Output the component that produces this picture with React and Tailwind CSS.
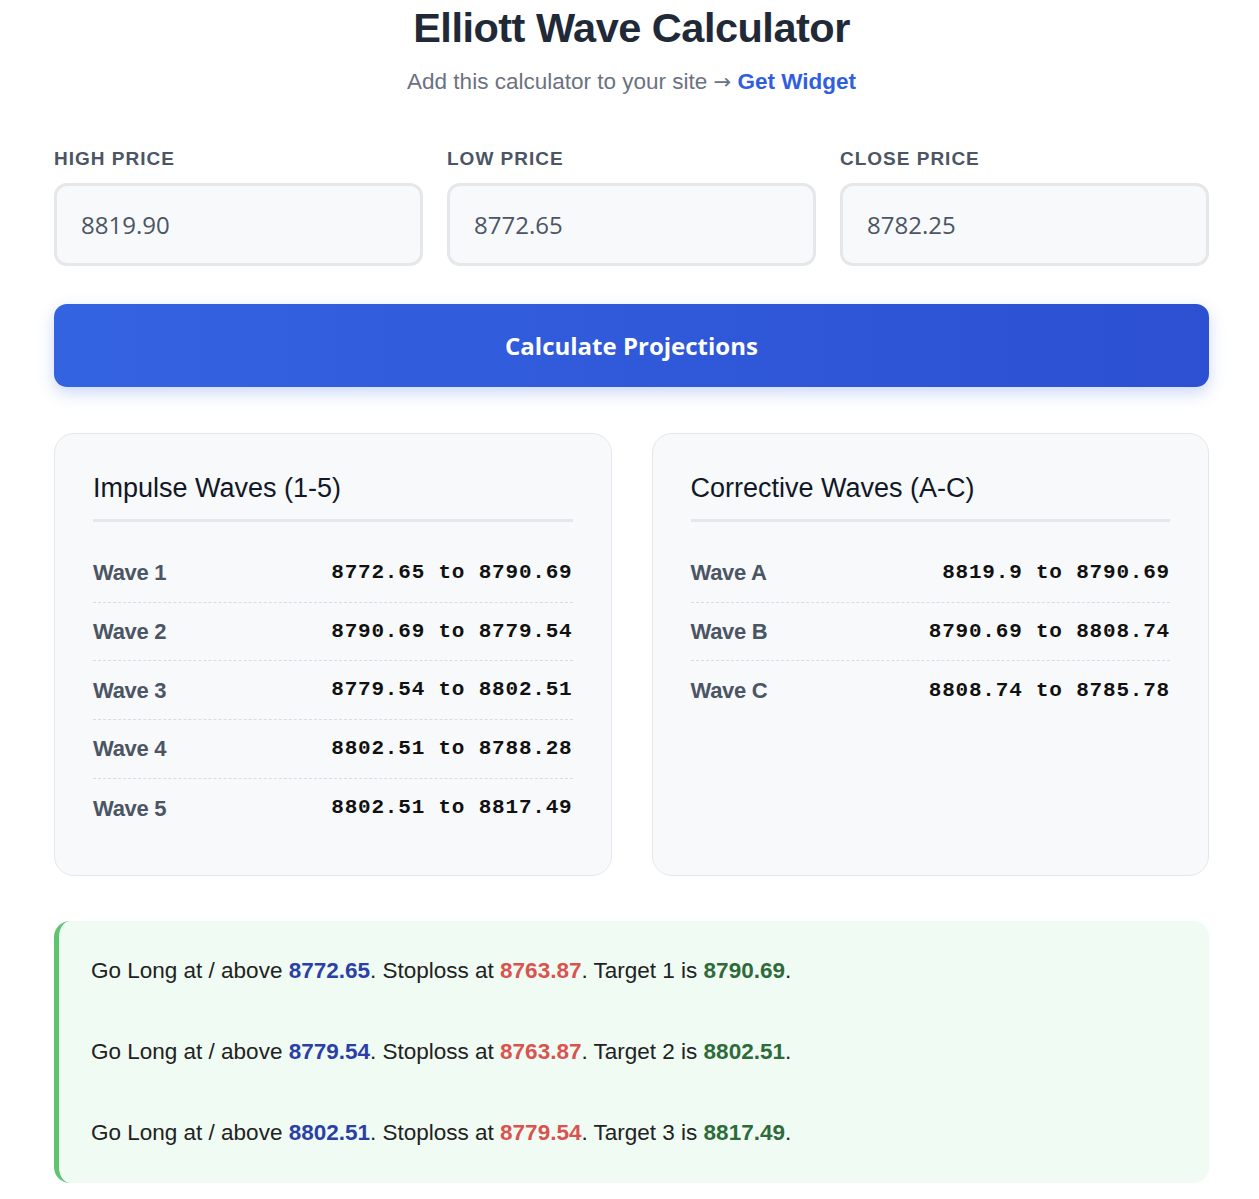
import React from 'react';

const impulse = [
  ['Wave 1', '8772.65 to 8790.69'],
  ['Wave 2', '8790.69 to 8779.54'],
  ['Wave 3', '8779.54 to 8802.51'],
  ['Wave 4', '8802.51 to 8788.28'],
  ['Wave 5', '8802.51 to 8817.49'],
];

const corrective = [
  ['Wave A', '8819.9 to 8790.69'],
  ['Wave B', '8790.69 to 8808.74'],
  ['Wave C', '8808.74 to 8785.78'],
];

const trades = [
  ['8772.65', '8763.87', '1', '8790.69'],
  ['8779.54', '8763.87', '2', '8802.51'],
  ['8802.51', '8779.54', '3', '8817.49'],
];

function WaveCard({ title, rows }) {
  return (
    <div className="bg-[#f8f9fb] border border-[#e5e7eb] rounded-[20px] px-[38px] pt-[38px] pb-[38px]">
      <h2 className="text-[27px] leading-[32px] text-[#111827] pb-[15px] border-b-[3px] border-[#e5e7eb]">
        {title}
      </h2>
      <div className="mt-[22px]">
        {rows.map(([label, value], i) => (
          <div
            key={label}
            className={
              'flex justify-between items-center h-[58.7px] ' +
              (i < rows.length - 1 ? 'border-b border-dashed border-[#d8dce2]' : '')
            }
          >
            <span className="text-[22px] font-bold text-[#4b5563] tracking-[-0.3px]">{label}</span>
            <span className="text-[21px] font-bold text-[#111] font-['Liberation_Mono',monospace] tracking-[0.8px]">
              {value}
            </span>
          </div>
        ))}
      </div>
    </div>
  );
}

export default function App() {
  return (
    <div className="min-h-screen bg-white font-['Liberation_Sans',Arial,sans-serif] pb-4">
      <div className="w-[1155px] ml-[54px]">
        <h1 className="text-center text-[41.5px] leading-[54px] font-bold text-[#1f2937] tracking-[-0.5px] pt-[1px]">
          Elliott Wave Calculator
        </h1>
        <p className="text-center text-[22.5px] leading-[34px] text-[#6b7280] mt-[10px]">
          Add this calculator to your site{' '}
          <span className="font-['DejaVu_Sans',sans-serif] text-[21px]">→</span>{' '}
          <a className="text-[#2f5fe0] font-bold">Get Widget</a>
        </p>

        <div className="grid grid-cols-3 gap-[24px] mt-[49px]">
          {[
            ['HIGH PRICE', '8819.90'],
            ['LOW PRICE', '8772.65'],
            ['CLOSE PRICE', '8782.25'],
          ].map(([label, value]) => (
            <div key={label}>
              <label className="block text-[19px] leading-[22px] font-bold tracking-[1px] text-[#4b5563]">
                {label}
              </label>
              <div className="mt-[13px] h-[83px] rounded-[13px] border-[3px] border-[#e5e7eb] bg-[#f8f9fb] flex items-center px-[24px] font-['Open_Sans',sans-serif] text-[24px] text-[#4b5563]">
                {value}
              </div>
            </div>
          ))}
        </div>

        <button className="mt-[38px] w-full h-[83px] rounded-[13px] bg-gradient-to-r from-[#3463e2] to-[#2c50d1] text-white text-[24px] font-bold font-['Open_Sans',sans-serif] shadow-[0_6px_16px_rgba(52,99,226,0.25)]">
          Calculate Projections
        </button>

        <div className="grid grid-cols-2 gap-[40px] mt-[46px]">
          <WaveCard title="Impulse Waves (1-5)" rows={impulse} />
          <WaveCard title="Corrective Waves (A-C)" rows={corrective} />
        </div>

        <div className="mt-[45px] bg-[#f0fbf3] border-l-[5px] border-[#5fc46e] rounded-[16px] pl-[32px] pt-[33px] pb-[34px]">
          {trades.map(([entry, stop, n, target], i) => (
            <p key={i} className="text-[22.5px] leading-[33px] text-[#222] py-[24px] first:pt-0 last:pb-0">
              Go Long at / above <b className="text-[#2a3fa8]">{entry}</b>. Stoploss at{' '}
              <b className="text-[#d9534f]">{stop}</b>. Target {n} is{' '}
              <b className="text-[#2e6b3a]">{target}</b>.
            </p>
          ))}
        </div>
      </div>
    </div>
  );
}
